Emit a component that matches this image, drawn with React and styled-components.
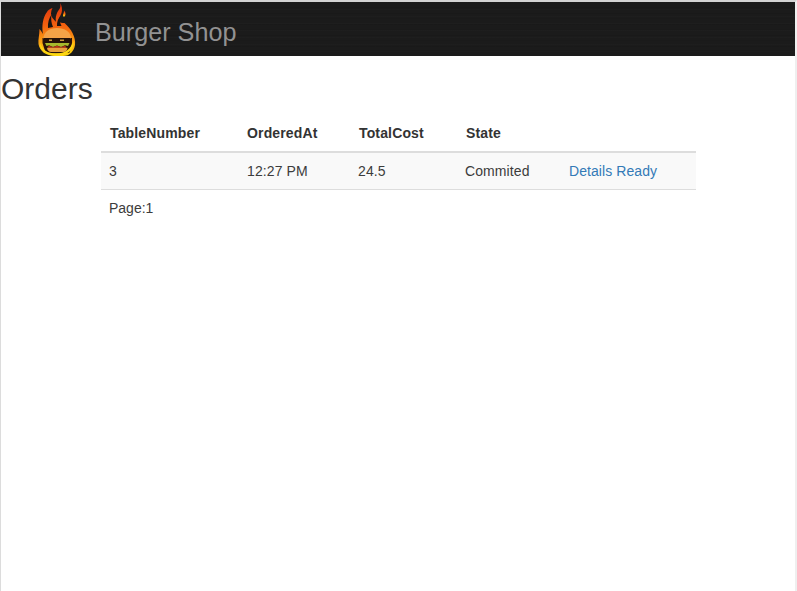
import React from "react";
import styled, { createGlobalStyle } from "styled-components";

const Global = createGlobalStyle`
  html, body { margin: 0; padding: 0; background: #fff; }
  body { font-family: "Liberation Sans", Arial, sans-serif; font-size: 14px; line-height: 20px; color: #333; }
`;

const Frame = styled.div`
  box-sizing: border-box;
  width: 797px;
  height: 591px;
  overflow: hidden;
  border-top: 2px solid #d4d4d4;
  border-left: 1px solid #dcdcdc;
  border-right: 2px solid #efefef;
`;

const NavBar = styled.header`
  height: 54px;
  display: flex;
  align-items: center;
  background-color: #1b1b1b;
  background-image:
    repeating-linear-gradient(180deg, rgba(255,255,255,.012) 0 1px, transparent 1px 7px),
    repeating-linear-gradient(180deg, rgba(0,0,0,.07) 0 1px, transparent 1px 5px, rgba(0,0,0,.04) 5px 6px, transparent 6px 11px);
  padding-left: 35px;
`;

const Brand = styled.div`
  display: flex;
  align-items: center;
  gap: 19px;
`;

const BrandName = styled.span`
  font-size: 25.2px;
  line-height: 30px;
  color: #929292;
  margin-top: 6px;
`;

const Title = styled.h2`
  margin: 14px 0 0;
  font-size: 30px;
  line-height: 37px;
  font-weight: 500;
  color: #333;
`;

const Content = styled.main`
  margin: 8px 0 0 100px;
  width: 595px;
`;

const OrdersTable = styled.table`
  width: 595px;
  table-layout: fixed;
  border-collapse: collapse;
`;

const HeadCell = styled.th`
  box-sizing: border-box;
  width: ${p => p.$w}px;
  height: 37px;
  padding: 0 8px 0 ${p => p.$pad ?? 9}px;
  text-align: left;
  font-weight: 700;
  letter-spacing: 0.15px;
  color: #333;
  border-bottom: 2px solid #ddd;
`;

const Row = styled.tr`
  background: #f9f9f9;
`;

const Cell = styled.td`
  box-sizing: border-box;
  height: 37px;
  padding: 0 8px;
  border-bottom: 1px solid #ddd;
  color: #3c3c3c;
  letter-spacing: 0.1px;
`;

const Link = styled.a`
  color: #337ab7;
  text-decoration: none;
  letter-spacing: 0.07px;
`;

const Pager = styled.div`
  padding: 8px 8px 0;
  color: #3c3c3c;
`;

const Logo = () => (
  <svg width="40" height="54" viewBox="36 2 40 54" aria-hidden="true">
    <defs>
      <linearGradient id="fl" x1="0" y1="0" x2="0" y2="1">
        <stop offset="0" stopColor="#e0300e" />
        <stop offset="0.45" stopColor="#f4650f" />
        <stop offset="0.7" stopColor="#fa9a12" />
        <stop offset="1" stopColor="#fdd80f" />
      </linearGradient>
    </defs>
    <path fill="url(#fl)" d="M55 56C46 56 39.500 51 38.500 44C38 39 39.500 35 39.500 29C41 31 42 32 43 34C41.500 26 43 17 47 12C47.500 10.500 50 8.500 52.500 8C50.500 12 50.500 15 52.500 18C54 20 55.500 21 56 22C55 17 57 12 59.500 9C60.800 7 60.500 5 60 3C62 6 62.500 9.500 61.500 13C60.500 16 58.500 18 58.500 21C60 23 62 23 64.500 23C68 26 71 30 72.500 33C74.500 37 75.500 41 75 45C74 51 70 56 63 56Z" />
    <path fill="url(#fl)" d="M64 10.500C65.500 12 66 14 65 16C64 17.500 62.800 16.500 63 15C63.200 13.500 64.200 12.500 64 10.500Z" />
    <path fill="#1a1512" d="M48 28C47.500 23 49 18 51.500 14.500C50.800 19 51.300 23 53 27Z" />
    <path fill="#1a1512" d="M57 26C56.800 22 58 19 60 16.500C59.400 20 60 23 61.500 26Z" />
    <path fill="#2a1408" d="M42.500 38H72V43L69.500 52.500C66 53.500 49 53.500 45.500 52.500L42.500 43Z" />
    <path fill="#f5a347" d="M43.500 38.500C43.500 32 49.500 28 57 28C64.500 28 71 32 71 38.500Z" />
    <path fill="#241107" d="M44 38H70.500V41.500C70.500 42.500 69.500 43 68.500 43H46C45 43 44 42.500 44 41.500Z" />
    <rect x="49" y="39.500" width="3" height="1.500" fill="#c79a3a" />
    <rect x="60" y="39.500" width="4" height="1.500" fill="#c79a3a" />
    <path fill="#a8ba2c" d="M45 43H69.500L68 46L65 45.200L61 47L57 45.600L53 47L49 45.200L46.500 46Z" />
    <path fill="#c22f17" d="M48.500 45.800L53 47L57 45.800L61 47L65.500 45.800L66 47.800H48Z" />
    <path fill="#e8a13c" d="M47 47.800H67.500C67.500 50.500 65.500 52 63.500 52H51C49 52 47 50.500 47 47.800Z" />
    <path fill="#fdd80f" d="M40 43C42 49.500 47.500 53.500 56 53.500C65 53.500 71 49 73.500 41C74.500 49 68 55.500 57 55.500C46 55.500 39.500 50 40 43Z" />
  </svg>
);

export default function App() {
  return (
    <Frame>
      <Global />
      <NavBar>
        <Brand>
          <Logo />
          <BrandName>Burger Shop</BrandName>
        </Brand>
      </NavBar>
      <Title>Orders</Title>
      <Content>
        <OrdersTable>
          <thead>
            <tr>
              <HeadCell $w={138}>TableNumber</HeadCell>
              <HeadCell $w={111} $pad={8}>OrderedAt</HeadCell>
              <HeadCell $w={107} $pad={9}>TotalCost</HeadCell>
              <HeadCell $w={104} $pad={9}>State</HeadCell>
              <HeadCell $w={135} />
            </tr>
          </thead>
          <tbody>
            <Row>
              <Cell>3</Cell>
              <Cell>12:27 PM</Cell>
              <Cell>24.5</Cell>
              <Cell>Commited</Cell>
              <Cell><Link href="#">Details</Link> <Link href="#">Ready</Link></Cell>
            </Row>
          </tbody>
        </OrdersTable>
        <Pager>Page:1</Pager>
      </Content>
    </Frame>
  );
}
